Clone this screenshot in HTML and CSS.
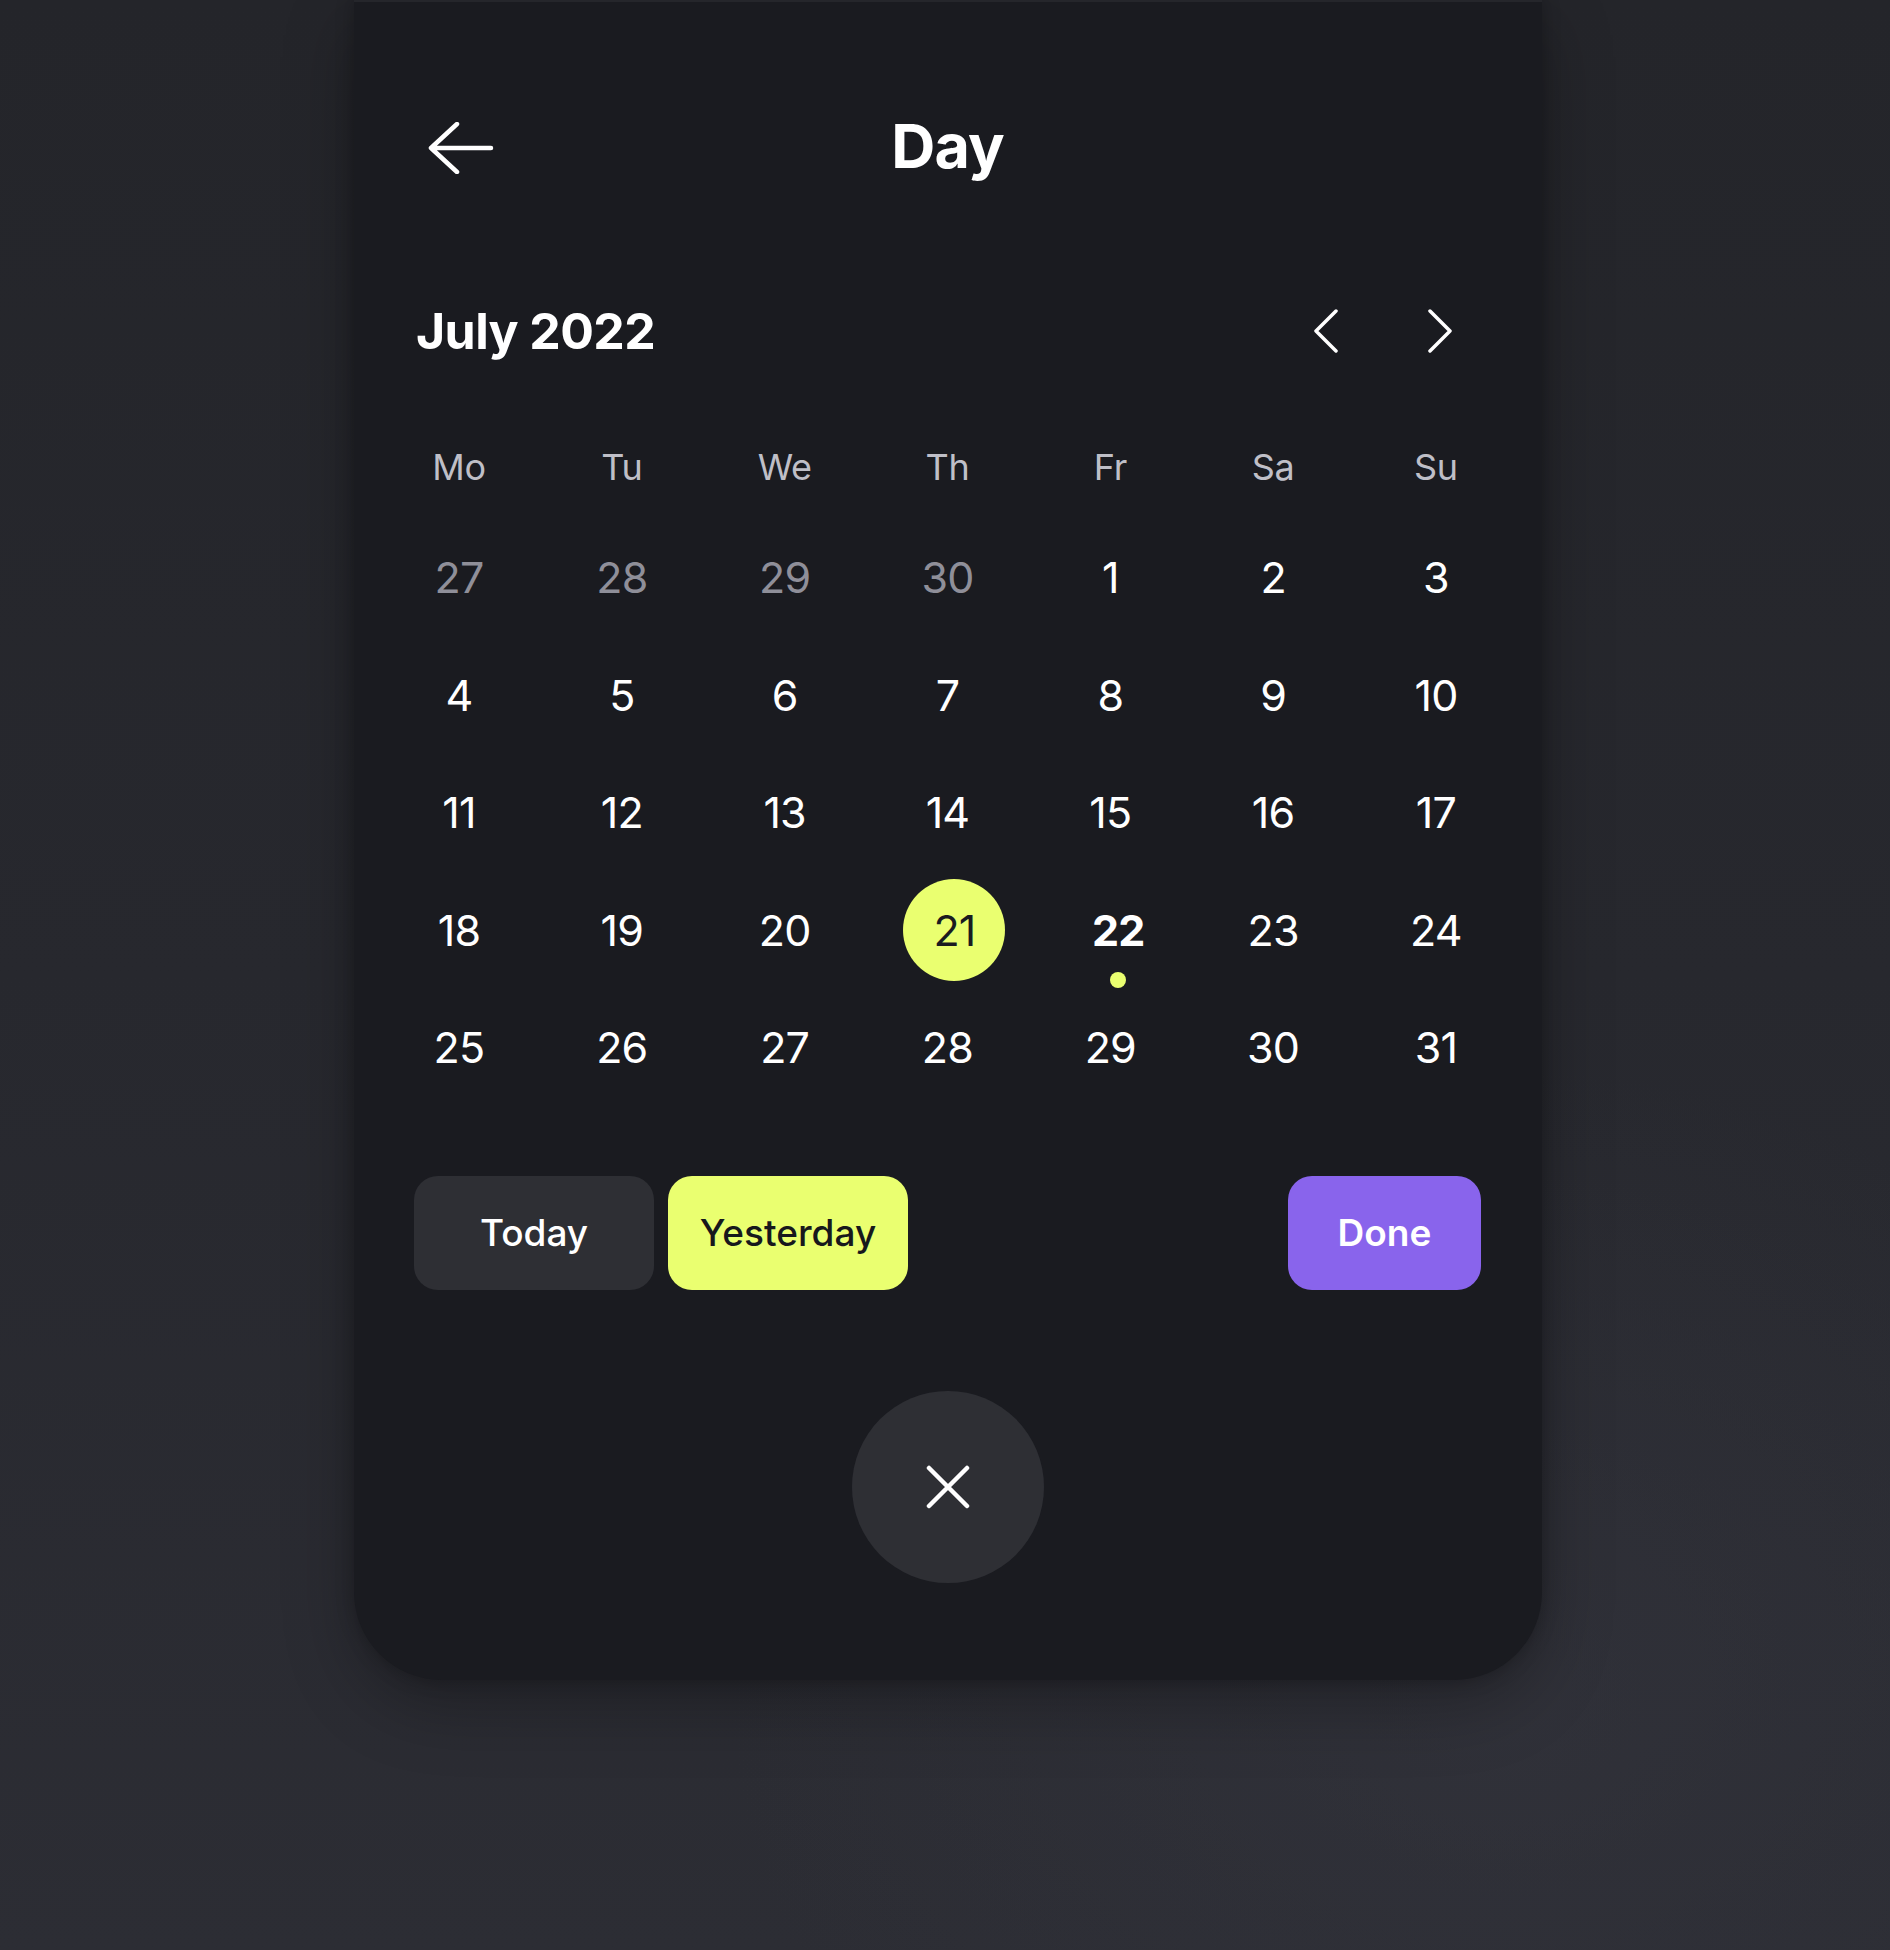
FILE: index.html
```html
<!DOCTYPE html>
<html lang="en">
<head>
<meta charset="utf-8">
<title>Day picker</title>
<link rel="stylesheet" href="styles.css">
</head>
<body>
<main class="card">
  <header class="topbar">
    <button class="icon-btn back" aria-label="Back">
      <svg width="66" height="52" viewBox="0 0 66 52" fill="none" stroke="#fff" stroke-width="4.5" stroke-linecap="round" stroke-linejoin="round"><path d="M63 26H3M29 2L3 26L29 50"/></svg>
    </button>
    <h1 class="title">Day</h1>
    <span></span>
  </header>

  <section class="month-row">
    <h2 class="month">July 2022</h2>
    <nav class="month-nav">
      <button class="icon-btn" aria-label="Previous month">
        <svg width="26" height="44" viewBox="0 0 26 44" fill="none" stroke="#fff" stroke-width="3.5" stroke-linecap="round" stroke-linejoin="round"><path d="M23 2L3 22L23 42"/></svg>
      </button>
      <button class="icon-btn" aria-label="Next month">
        <svg width="26" height="44" viewBox="0 0 26 44" fill="none" stroke="#fff" stroke-width="3.5" stroke-linecap="round" stroke-linejoin="round"><path d="M3 2L23 22L3 42"/></svg>
      </button>
    </nav>
  </section>

  <section class="calendar">
    <div class="wd">Mo</div><div class="wd">Tu</div><div class="wd">We</div><div class="wd">Th</div><div class="wd">Fr</div><div class="wd">Sa</div><div class="wd">Su</div>

    <div class="day muted">27</div><div class="day muted">28</div><div class="day muted">29</div><div class="day muted">30</div><div class="day">1</div><div class="day">2</div><div class="day">3</div>
    <div class="day">4</div><div class="day">5</div><div class="day">6</div><div class="day">7</div><div class="day">8</div><div class="day">9</div><div class="day">10</div>
    <div class="day">11</div><div class="day">12</div><div class="day">13</div><div class="day">14</div><div class="day">15</div><div class="day">16</div><div class="day">17</div>
    <div class="day">18</div><div class="day">19</div><div class="day">20</div><div class="day selected"><span class="sel-circle">21</span></div><div class="day today">22</div><div class="day">23</div><div class="day">24</div>
    <div class="day">25</div><div class="day">26</div><div class="day">27</div><div class="day">28</div><div class="day">29</div><div class="day">30</div><div class="day">31</div>
  </section>

  <section class="actions">
    <div class="quick">
      <button class="btn btn-grey">Today</button>
      <button class="btn btn-yellow">Yesterday</button>
    </div>
    <button class="btn btn-purple">Done</button>
  </section>

  <div class="close-wrap">
    <button class="close" aria-label="Close">
      <svg width="44" height="44" viewBox="0 0 44 44" fill="none" stroke="#fff" stroke-width="4.5" stroke-linecap="round"><path d="M3 3L41 41M41 3L3 41"/></svg>
    </button>
  </div>
</main>
</body>
</html>
```

FILE: styles.css
```css
* { box-sizing: border-box; }

html, body {
  margin: 0;
  padding: 0;
}

body {
  width: 1890px;
  height: 1950px;
  overflow: hidden;
  background:
    radial-gradient(ellipse 1100px 900px at 1500px 1700px, rgba(52, 53, 62, 0.55), rgba(52, 53, 62, 0) 70%),
    linear-gradient(180deg, #24252a 0%, #27282e 50%, #2c2d34 100%);
  font-family: "Inter", "Noto Sans", "Liberation Sans", sans-serif;
  color: #fff;
}

.card {
  width: 1188px;
  margin-left: 354px;
  background: #1a1b20;
  border-radius: 0 0 88px 88px;
  padding: 98px 61px 97px 60px;
  box-shadow: 0 24px 70px rgba(0, 0, 0, 0.28), 0 0 18px rgba(0, 0, 0, 0.25);
  border-top: 2px solid #25262b;
}

button {
  font-family: inherit;
  border: 0;
  background: none;
  padding: 0;
  cursor: pointer;
}

.icon-btn {
  display: flex;
  align-items: center;
  justify-content: center;
}

.topbar {
  display: grid;
  grid-template-columns: 1fr auto 1fr;
  align-items: center;
  height: 96px;
}

.back {
  justify-self: start;
  margin-left: 14px;
}

.title {
  margin: -3px 0 0;
  font-size: 61px;
  font-weight: 700;
  letter-spacing: -0.8px;
  line-height: 1;
}

.month-row {
  margin-top: 105px;
  height: 60px;
  display: flex;
  align-items: center;
  justify-content: space-between;
}

.month {
  margin: 0 0 0 2px;
  font-size: 50px;
  font-weight: 700;
  letter-spacing: -0.6px;
  line-height: 1;
}

.month-nav {
  display: flex;
  gap: 88px;
  margin-right: 28px;
}

.calendar {
  margin-top: 54px;
  display: grid;
  grid-template-columns: repeat(7, 90px);
  grid-template-rows: 104px repeat(5, 117.5px);
  justify-content: space-between;
}

.wd, .day {
  display: flex;
  align-items: center;
  justify-content: center;
  line-height: 1;
}

.wd {
  font-size: 36px;
  color: #bfbfc7;
  letter-spacing: -0.3px;
}

.day {
  font-size: 43px;
  color: #fff;
  letter-spacing: -0.8px;
  position: relative;
}

.day.muted {
  color: #8f8f99;
}

.day.selected {
  margin-left: 14px;
}

.sel-circle {
  width: 102px;
  height: 102px;
  flex: none;
  border-radius: 50%;
  background: #eaff70;
  color: #1a1b20;
  display: flex;
  align-items: center;
  justify-content: center;
}

.day.today {
  font-weight: 700;
  margin-left: 16px;
}

.day.today::after {
  content: "";
  position: absolute;
  left: 50%;
  top: 50%;
  width: 16px;
  height: 16px;
  margin: 42px 0 0 -8px;
  border-radius: 50%;
  background: #eaff70;
}

.actions {
  margin-top: 69px;
  display: flex;
  justify-content: space-between;
}

.quick {
  display: flex;
  gap: 14px;
}

.btn {
  height: 114px;
  border-radius: 24px;
  font-size: 37px;
  font-weight: 500;
  display: flex;
  align-items: center;
  justify-content: center;
}

.btn-grey {
  width: 240px;
  background: #2e2f34;
  color: #fff;
}

.btn-yellow {
  width: 240px;
  background: #eaff70;
  color: #17181c;
}

.btn-purple {
  width: 193px;
  background: #8964ec;
  color: #fff;
  font-weight: 600;
}

.close-wrap {
  margin-top: 101px;
  display: flex;
  justify-content: center;
}

.close {
  width: 192px;
  height: 192px;
  border-radius: 50%;
  background: #2e2f34;
  display: flex;
  align-items: center;
  justify-content: center;
}
```
